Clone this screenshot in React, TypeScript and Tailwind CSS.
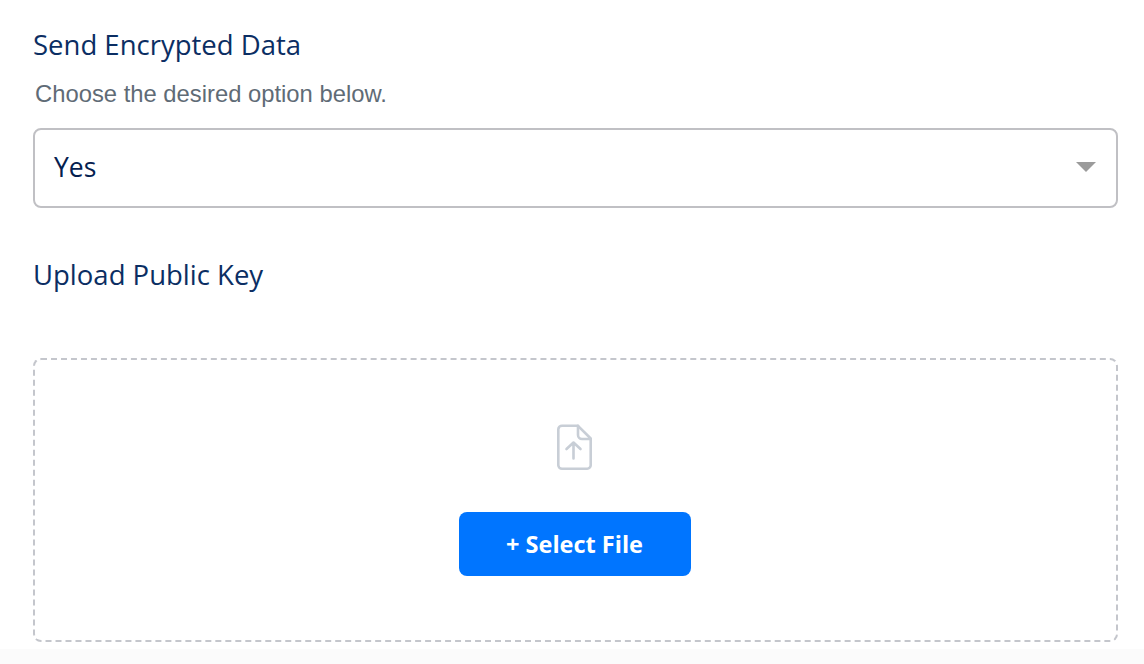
export default function App() {
  return (
    <div className="h-[664px] w-[1144px] overflow-hidden bg-[#fbfbfb] font-['Open_Sans','Liberation_Sans',sans-serif]">
      <div className="h-[649px] bg-white pl-[33px] pr-[26px]">
        <h2 className="pt-[28px] text-[27.5px] leading-[34px] font-normal text-[#0b2e63]">Send Encrypted Data</h2>
        <p className="mt-[17px] pl-[2px] font-['Liberation_Sans',sans-serif] text-[23.8px] leading-[30px] text-[#5f6b76]">
          Choose the desired option below.
        </p>
        <div className="mt-[19px] flex h-[80px] items-center justify-between rounded-lg border-2 border-[#c0c0c4] pl-[19px] pr-[20px]">
          <span className="mb-[1px] text-[26.5px] text-[#04204f]">Yes</span>
          <svg className="mb-[2px]" width="20" height="10" viewBox="0 0 20 10" aria-hidden="true">
            <path d="M0 0h20L10 10z" fill="#9b9b9b" />
          </svg>
        </div>
        <h2 className="mt-[50px] text-[27.5px] leading-[34px] font-normal text-[#0b2e63]">Upload Public Key</h2>
        <div className="mt-[66px] flex h-[284px] flex-col items-center rounded-lg border-2 border-dashed border-[#c4c6cc] pt-[64px] pr-[2px]">
          <svg width="35" height="47" viewBox="0 0 35 47" fill="none" stroke="#c8ced6" strokeWidth="2.6" strokeLinecap="round" strokeLinejoin="round" aria-hidden="true">
            <path d="M5 1.800h16L33.700 14.500V41.200a3.500 3.500 0 0 1-3.500 3.500H5a3.700 3.700 0 0 1-3.700-3.500V5.300A3.700 3.700 0 0 1 5 1.800z" />
            <path d="M21 1.800V11a4 4 0 0 0 4 4h8.700" />
            <path d="M16.500 34.500V18.500M9.500 25l7-6.500 7 6.500" />
          </svg>
          <button className="mt-[41px] h-[64px] w-[232px] rounded-lg bg-[#0075ff] pt-[2px] text-[23.5px] font-bold text-white">
            + Select File
          </button>
        </div>
      </div>
    </div>
  );
}
